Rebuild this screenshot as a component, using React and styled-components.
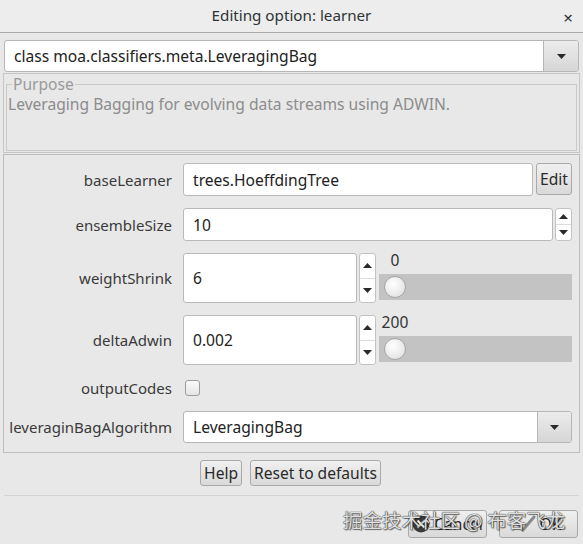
import React from "react";
import styled, { createGlobalStyle } from "styled-components";

const Global = createGlobalStyle`
  html, body { margin: 0; padding: 0; background: #e8e8e8; }
  body { font-family: "Noto Sans", "Open Sans", sans-serif; }
  * { box-sizing: border-box; }
`;

const Window = styled.div`
  width: 583px;
  height: 544px;
  background: #e8e8e8;
  position: relative;
  overflow: hidden;
  color: #333;
  font-size: 15.6px;
  display: flex;
  flex-direction: column;
`;

const TitleBar = styled.div`
  height: 33px;
  flex: none;
  background: #ededed;
  border-bottom: 1px solid #a9a9a9;
  display: flex;
  align-items: center;
  justify-content: center;
  position: relative;
  font-size: 15.2px;
  color: #2e3436;
  padding-bottom: 2px;
`;

const CloseBtn = styled.span`
  position: absolute;
  right: 10px;
  top: 6px;
  font-size: 17px;
  color: #2e3436;
`;

const Body = styled.div`
  padding: 7px 3px 0 3px;
  display: flex;
  flex-direction: column;
`;

const ComboBox = styled.div`
  height: ${(p) => p.$h || 32}px;
  display: flex;
  background: #fff;
  border: 1px solid #b6b6b6;
  border-radius: 3px;
  margin: ${(p) => p.$margin || "0"};
  overflow: hidden;
`;

const ComboText = styled.div`
  flex: 1;
  display: flex;
  align-items: center;
  padding-left: ${(p) => p.$pad || 9}px;
  color: #222;
`;

const ComboButton = styled.div`
  width: ${(p) => p.$w || 35}px;
  flex: none;
  border-left: 1px solid #b6b6b6;
  background: linear-gradient(#ececec, #d6d6d6);
  display: flex;
  align-items: center;
  justify-content: center;
`;

const Arrow = ({ up }) => (
  <svg width="9" height="5" viewBox="0 0 9 5">
    {up ? (
      <polygon points="0,5 9,5 4.5,0" fill="#2a2a2a" />
    ) : (
      <polygon points="0,0 9,0 4.5,5" fill="#2a2a2a" />
    )}
  </svg>
);

const PurposeBox = styled.div`
  margin-top: 1px;
  height: 80px;
  border: 1px solid #c6c6c6;
  padding: 0 2px 1px 2px;
  display: flex;
`;

const Fieldset = styled.fieldset`
  flex: 1;
  margin: 0;
  padding: 0 1px;
  border: 1px solid #c9c9c9;
  min-width: 0;
`;

const Legend = styled.legend`
  color: #9a9a9a;
  padding: 0 1px;
  margin-left: 4px;
  line-height: 20px;
`;

const PurposeText = styled.div`
  color: #8c8c8c;
  margin-top: 1px;
  line-height: 18px;
`;

const OptionsPanel = styled.div`
  margin-top: 1px;
  border: 1px solid #bdbdbd;
  padding: 8px 7px 9px 0;
  display: grid;
  grid-template-columns: 168px 1fr;
  column-gap: 11px;
  row-gap: 12px;
  align-items: center;
`;

const Label = styled.div`
  text-align: right;
  color: #3a3a3a;
  font-size: 15px;
  white-space: nowrap;
`;

const FieldRow = styled.div`
  height: ${(p) => p.$h}px;
  display: flex;
  gap: ${(p) => p.$gap ?? 3}px;
  align-items: stretch;
`;

const TextField = styled.div`
  flex: ${(p) => (p.$w ? "none" : "1")};
  width: ${(p) => (p.$w ? p.$w + "px" : "auto")};
  background: #fff;
  border: 1px solid #b9b9b9;
  border-radius: 3px;
  display: flex;
  align-items: center;
  padding-left: 9px;
  color: #222;
`;

const Button = styled.div`
  height: ${(p) => p.$h || 26}px;
  padding: 0 ${(p) => p.$px || 3}px;
  border: 1px solid #a9a9a9;
  border-radius: 3px;
  background: linear-gradient(#f0f0f0, #d9d9d9);
  display: flex;
  align-items: center;
  justify-content: center;
  gap: 4px;
  color: #2a2a2a;
  flex: none;
  width: ${(p) => (p.$w ? p.$w + "px" : "auto")};
`;

const Spinner = styled.div`
  width: 17px;
  flex: none;
  border: 1px solid #c3c3c3;
  border-radius: 3px;
  background: #fff;
  display: flex;
  flex-direction: column;
`;

const SpinHalf = styled.div`
  flex: 1;
  display: flex;
  align-items: center;
  justify-content: center;
  & + & { border-top: 1px solid #dcdcdc; }
`;

const SpinButtons = () => (
  <Spinner>
    <SpinHalf>
      <Arrow up />
    </SpinHalf>
    <SpinHalf>
      <Arrow />
    </SpinHalf>
  </Spinner>
);

const SliderCol = styled.div`
  flex: 1;
  display: flex;
  flex-direction: column;
  margin-left: 1px;
`;

const SliderValue = styled.div`
  height: 21px;
  width: 32px;
  text-align: center;
  line-height: 14px;
  color: #333;
`;

const Track = styled.div`
  height: 26px;
  background: #c3c3c3;
  display: flex;
  align-items: center;
  padding-left: 5px;
`;

const Thumb = styled.div`
  width: 22px;
  height: 22px;
  border-radius: 50%;
  border: 1px solid #a6a6a6;
  background: radial-gradient(circle at 40% 35%, #ffffff, #e6e6e6 70%, #d8d8d8);
`;

const Checkbox = styled.div`
  width: 15px;
  height: 16px;
  margin-left: 2px;
  align-self: center;
  border: 1px solid #9c9c9c;
  border-radius: 3px;
  background: linear-gradient(#fbfbfb, #e4e4e4);
`;

const HelpRow = styled.div`
  display: flex;
  justify-content: center;
  gap: 8px;
  margin-top: 7px;
  padding-right: 2px;
`;

const Separator = styled.div`
  height: 1px;
  background: #d4d4d4;
  margin: 9px 1px 0 1px;
`;

const DialogButtons = styled.div`
  display: flex;
  justify-content: flex-end;
  gap: 12px;
  margin-top: 14px;
  padding-right: 2px;
`;

const Watermark = styled.div`
  position: absolute;
  left: 343px;
  top: 506px;
  font-family: "Noto Sans CJK SC", sans-serif;
  font-size: 19.5px;
  line-height: 28px;
  color: rgba(255, 255, 255, 0.85);
  text-shadow: 0 0 1px #333, 0 0 1px #333, 1px 1px 1px rgba(0,0,0,0.5);
  white-space: nowrap;
  pointer-events: none;
`;

const CancelIcon = () => (
  <svg width="18" height="18" viewBox="0 0 18 18">
    <circle cx="9" cy="9" r="8.5" fill="#3a3a3a" />
    <path d="M5.5 5.5 L12.5 12.5 M12.5 5.5 L5.5 12.5" stroke="#eee" strokeWidth="2" />
  </svg>
);

const OkIcon = () => (
  <svg width="20" height="18" viewBox="0 0 20 18">
    <path d="M2 9 L7 15 L18 2" stroke="#8a8a8a" strokeWidth="3" fill="none" strokeLinecap="round" />
  </svg>
);

export default function App() {
  return (
    <>
      <Global />
      <Window>
        <TitleBar>
          Editing option: learner
          <CloseBtn>×</CloseBtn>
        </TitleBar>
        <Body>
          <ComboBox $margin="0 1px">
            <ComboText>class moa.classifiers.meta.LeveragingBag</ComboText>
            <ComboButton>
              <Arrow />
            </ComboButton>
          </ComboBox>
          <PurposeBox>
            <Fieldset>
              <Legend>Purpose</Legend>
              <PurposeText>Leveraging Bagging for evolving data streams using ADWIN.</PurposeText>
            </Fieldset>
          </PurposeBox>
          <OptionsPanel>
            <Label>baseLearner</Label>
            <FieldRow $h={33}>
              <TextField>trees.HoeffdingTree</TextField>
              <Button $h={32}>Edit</Button>
            </FieldRow>

            <Label>ensembleSize</Label>
            <FieldRow $h={33} $gap={2}>
              <TextField>10</TextField>
              <SpinButtons />
            </FieldRow>

            <Label>weightShrink</Label>
            <FieldRow $h={50} $gap={2}>
              <TextField $w={174}>6</TextField>
              <SpinButtons />
              <SliderCol>
                <SliderValue>0</SliderValue>
                <Track>
                  <Thumb />
                </Track>
              </SliderCol>
            </FieldRow>

            <Label>deltaAdwin</Label>
            <FieldRow $h={50} $gap={2}>
              <TextField $w={174}>0.002</TextField>
              <SpinButtons />
              <SliderCol>
                <SliderValue>200</SliderValue>
                <Track>
                  <Thumb />
                </Track>
              </SliderCol>
            </FieldRow>

            <Label>outputCodes</Label>
            <FieldRow $h={22}>
              <Checkbox />
            </FieldRow>

            <Label>leveraginBagAlgorithm</Label>
            <ComboBox $h={32}>
              <ComboText>LeveragingBag</ComboText>
              <ComboButton $w={34}>
                <Arrow />
              </ComboButton>
            </ComboBox>
          </OptionsPanel>
          <HelpRow>
            <Button>Help</Button>
            <Button>Reset to defaults</Button>
          </HelpRow>
          <Separator />
          <DialogButtons>
            <Button $h={28} $w={79}>
              <CancelIcon />
              Cancel
            </Button>
            <Button $h={28} $w={79}>
              <OkIcon />
              OK
            </Button>
          </DialogButtons>
        </Body>
        <Watermark>掘金技术社区 @ 布客飞龙</Watermark>
      </Window>
    </>
  );
}
